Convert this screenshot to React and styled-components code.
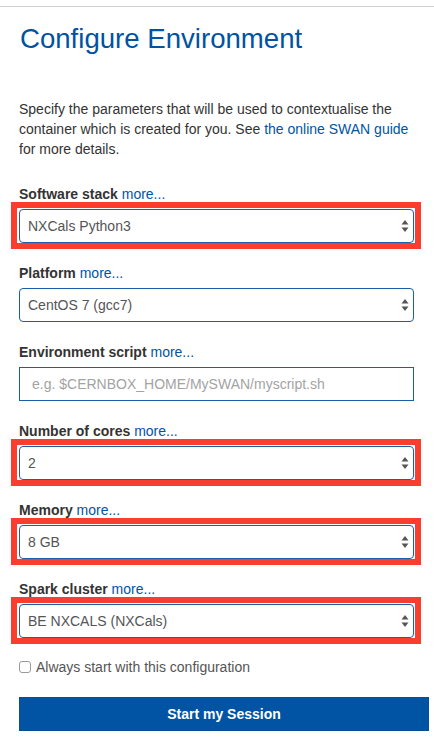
import React from "react";
import styled, { createGlobalStyle } from "styled-components";

const Global = createGlobalStyle`
  html, body { margin: 0; padding: 0; background: #fff; }
  body { font-family: "Liberation Sans", Arial, Helvetica, sans-serif; color: #333; }
  * { box-sizing: border-box; }
`;

const Panel = styled.div`
  margin-top: 6px;
  border-top: 1px solid #cfcfcf;
  padding: 0 5px 20px 19px;
  width: 434px;
`;

const Title = styled.h1`
  margin: 16px 0 0 1px;
  font-size: 27.6px;
  line-height: 32px;
  font-weight: 400;
  color: #0053a1;
`;

const Intro = styled.p`
  margin: 44px 15px 0 0;
  font-size: 14px;
  line-height: 20px;
  color: #333;
`;

const Link = styled.a`
  color: #0054a4;
  text-decoration: none;
  font-weight: 400;
`;

const Form = styled.div`
  margin-top: 25px;
  margin-right: 15px;
  display: flex;
  flex-direction: column;
`;

const Field = styled.div`
  display: flex;
  flex-direction: column;
  margin-bottom: 20px;
`;

const Label = styled.label`
  font-size: 14px;
  line-height: 20px;
  font-weight: 700;
  color: #333;
  margin-bottom: 5px;
`;

const Highlight = styled.div`
  margin: ${(p) => (p.$on ? "-7px -7px -6px -8px" : "0")};
  border: ${(p) => (p.$on ? "6px solid #f93e30" : "none")};
  padding: ${(p) => (p.$on ? "1px 1px 0 2px" : "0")};
`;

const SelectWrap = styled.div`
  position: relative;
  height: 34px;
`;

const Select = styled.select`
  appearance: none;
  -webkit-appearance: none;
  width: 100%;
  height: 34px;
  border: 1px solid #1d5ea8;
  border-radius: 4px;
  background: #fff;
  padding: 0 24px 0 8px;
  font-family: "Liberation Sans", Arial, sans-serif;
  font-size: 14px;
  color: #555;
  outline: none;
`;

const Arrows = styled.svg`
  position: absolute;
  right: 5px;
  top: 50%;
  transform: translateY(-50%);
  pointer-events: none;
`;

const TextInput = styled.input`
  width: 100%;
  height: 34px;
  border: 1px solid #1d5ea8;
  border-radius: 0;
  padding: 0 12px;
  font-family: "Liberation Sans", Arial, sans-serif;
  font-size: 14px;
  color: #555;
  outline: none;
  &::placeholder { color: #a3a3a3; }
`;

const CheckRow = styled.label`
  display: flex;
  align-items: center;
  gap: 5px;
  font-size: 14px;
  line-height: 20px;
  color: #555;
  margin-top: -1px;
`;

const Box = styled.span`
  width: 12px;
  height: 12px;
  border: 1px solid #9a9a9a;
  border-radius: 3px;
  background: #fff;
  display: inline-block;
`;

const Button = styled.button`
  margin-top: 20px;
  width: 410px;
  height: 34px;
  background: #0054a3;
  border: 1px solid #0a4d92;
  color: #fff;
  font-family: "Liberation Sans", Arial, sans-serif;
  font-size: 14px;
  font-weight: 700;
  cursor: pointer;
`;

const ArrowIcon = () => (
  <Arrows width="8" height="13" viewBox="0 0 8 13">
    <path d="M4 0.5 L7.5 5 L0.5 5 Z" fill="#555" />
    <path d="M0.5 8 L7.5 8 L4 12.5 Z" fill="#555" />
  </Arrows>
);

const SelectField = ({ label, value, highlight }) => (
  <Field>
    <Label>
      {label} <Link href="#">more...</Link>
    </Label>
    <Highlight $on={highlight}>
      <SelectWrap>
        <Select defaultValue={value}>
          <option>{value}</option>
        </Select>
        <ArrowIcon />
      </SelectWrap>
    </Highlight>
  </Field>
);

export default function App() {
  return (
    <>
      <Global />
      <Panel>
        <Title>Configure Environment</Title>
        <Intro>
          Specify the parameters that will be used to contextualise the container which is created for you. See{" "}
          <Link href="#">the online SWAN guide</Link> for more details.
        </Intro>
        <Form>
          <SelectField label="Software stack" value="NXCals Python3" highlight />
          <SelectField label="Platform" value="CentOS 7 (gcc7)" />
          <Field>
            <Label>
              Environment script <Link href="#">more...</Link>
            </Label>
            <TextInput placeholder="e.g. $CERNBOX_HOME/MySWAN/myscript.sh" />
          </Field>
          <SelectField label="Number of cores" value="2" highlight />
          <SelectField label="Memory" value="8 GB" highlight />
          <SelectField label="Spark cluster" value="BE NXCALS (NXCals)" highlight />
          <CheckRow>
            <Box />
            Always start with this configuration
          </CheckRow>
        </Form>
        <Button>Start my Session</Button>
      </Panel>
    </>
  );
}
